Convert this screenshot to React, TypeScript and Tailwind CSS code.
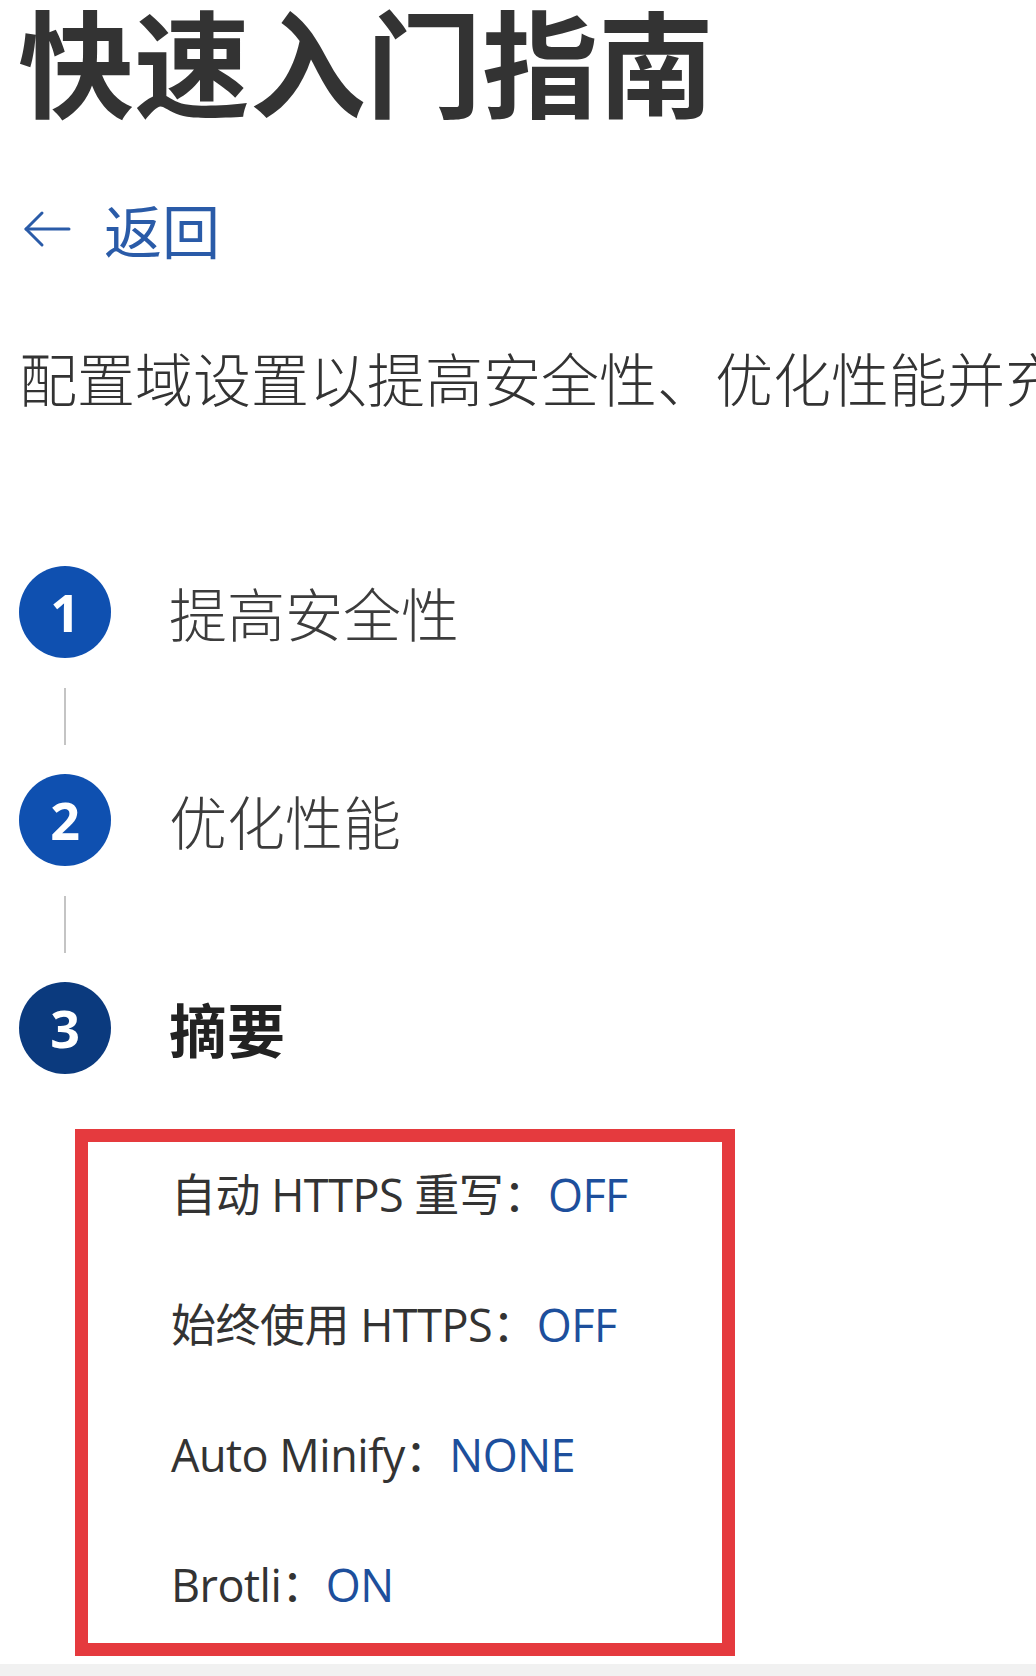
const steps = [
  { n: 1, label: "提高安全性", active: false },
  { n: 2, label: "优化性能", active: false },
  { n: 3, label: "摘要", active: true },
];

const summary = [
  { label: "自动 HTTPS 重写：", value: "OFF" },
  { label: "始终使用 HTTPS：", value: "OFF" },
  { label: "Auto Minify：", value: "NONE" },
  { label: "Brotli：", value: "ON" },
];

const cjk = "font-['Noto_Sans_CJK_SC',sans-serif]";
const mixed = "font-['Open_Sans','Noto_Sans_CJK_SC',sans-serif]";

const App = () => {
  return (
    <div className="w-[1036px] h-[1676px] bg-white overflow-hidden flex flex-col">
      <h1 className={`${cjk} pl-[18px] text-[116px] leading-none font-bold text-[#333333] whitespace-nowrap`}>
        快速入门指南
      </h1>

      <a href="#" className="mt-[84px] ml-[23px] flex items-center gap-[33px] text-[#2a5ba8]">
        <svg width="48" height="38" viewBox="0 0 48 38" fill="none" stroke="currentColor" strokeWidth="3" strokeLinecap="round" strokeLinejoin="round">
          <path d="M46 19H3" />
          <path d="M19 3L3 19L19 35" />
        </svg>
        <span className={`${cjk} text-[58px] leading-none font-normal`}>返回</span>
      </a>

      <p className={`${cjk} mt-[90px] pl-[19px] text-[58px] leading-none font-light text-[#333333] whitespace-nowrap`}>
        配置域设置以提高安全性、优化性能并充分利用 Cloudflare 的功能。
      </p>

      <div className="mt-[160px] pl-[19px] flex flex-col">
        {steps.map((s, i) => (
          <div key={s.n} className="flex flex-col">
            <div className="flex items-center gap-[58px]">
              <div
                className={`w-[92px] h-[92px] rounded-full flex items-center justify-center text-white text-[52px] font-bold font-['Open_Sans',sans-serif] ${
                  s.active ? "bg-[#0b3a7e]" : "bg-[#0f50b0]"
                }`}
              >
                {s.n}
              </div>
              <span
                className={`${cjk} text-[58px] leading-none ${
                  s.active ? "font-bold text-[#222222]" : "font-light text-[#3c3c3c]"
                }`}
              >
                {s.label}
              </span>
            </div>
            {i < steps.length - 1 && (
              <div className="h-[116px] flex items-center">
                <div className="ml-[45px] w-[2px] h-[57px] bg-[#c4c4c4]" />
              </div>
            )}
          </div>
        ))}
      </div>

      <div className="mt-[55px] ml-[75px] w-[660px] h-[527px] border-[13px] border-[#e53a3e] pl-[83px] pt-[28px] flex flex-col gap-[80px]">
        {summary.map((row) => (
          <div key={row.label} className={`${mixed} text-[45px] leading-[50px] text-[#333333] whitespace-nowrap tracking-[-0.5px]`}>
            {row.label}
            <span className="text-[#1d4f9c]">{row.value}</span>
          </div>
        ))}
      </div>

      <div className="mt-auto h-[12px] bg-[#f1f1f1]" />
    </div>
  );
};

export default App;
